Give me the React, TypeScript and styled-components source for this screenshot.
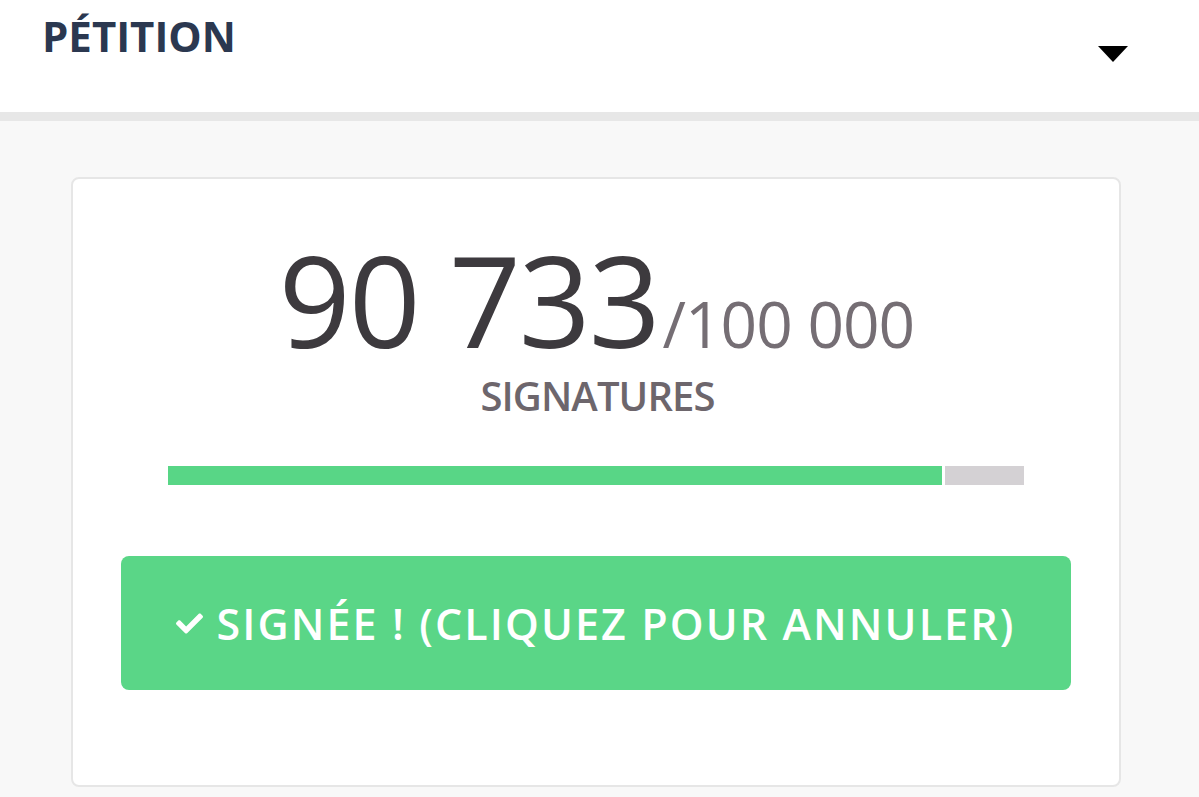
import React from "react";
import styled, { createGlobalStyle } from "styled-components";
import { FaCheck } from "react-icons/fa";

const Global = createGlobalStyle`
  html, body { margin: 0; padding: 0; background: #f8f8f8; }
  body { font-family: "Open Sans", "Noto Sans", sans-serif; }
  #root { min-height: 797px; }
`;

const Page = styled.div`
  width: 1199px;
  min-height: 797px;
  background: #f8f8f8;
  display: flex;
  flex-direction: column;
`;

const Header = styled.header`
  background: #ffffff;
  border-bottom: 9px solid #e7e7e7;
  box-sizing: content-box;
  display: flex;
  justify-content: space-between;
  align-items: flex-start;
  padding: 15px 71px 0 42px;
  height: 97px;
`;

const Title = styled.h1`
  margin: 0;
  font-size: 42px;
  line-height: 1;
  font-weight: 700;
  letter-spacing: 0;
  color: #2b3850;
`;

const Caret = styled.svg`
  margin-top: 31px;
  width: 30px;
  height: 16px;
  display: block;
`;

const Main = styled.main`
  padding: 56px 78px 0 71px;
`;

const Card = styled.section`
  background: #ffffff;
  border: 2px solid #e6e6e6;
  border-radius: 8px;
  padding: 57px 48px 95px;
  display: flex;
  flex-direction: column;
  align-items: center;
`;

const Count = styled.div`
  font-size: 126px;
  line-height: 1;
  font-weight: 400;
  color: #3d3a3e;
  letter-spacing: -2.2px;
  white-space: nowrap;
  padding-left: 1px;
`;

const Goal = styled.span`
  font-size: 64px;
  letter-spacing: -1px;
  color: #756e74;
  margin-left: 4px;
`;

const Label = styled.div`
  margin-top: 14px;
  font-size: 40px;
  line-height: 1;
  font-weight: 600;
  letter-spacing: -0.9px;
  color: #6d666c;
  padding-left: 3px;
`;

const Track = styled.div`
  margin-top: 50px;
  width: 856px;
  height: 19px;
  background: #d4d1d4;
  display: flex;
`;

const Fill = styled.div`
  height: 100%;
  background: #58d686;
  border-right: 3px solid #ffffff;
  box-sizing: border-box;
`;

const SignButton = styled.button`
  margin-top: 71px;
  width: 950px;
  height: 134px;
  border: none;
  border-radius: 8px;
  background: #5ad687;
  color: #ffffff;
  font-family: "Open Sans", "Noto Sans", sans-serif;
  font-size: 43px;
  line-height: 1;
  font-weight: 600;
  letter-spacing: 2.1px;
  display: flex;
  align-items: center;
  justify-content: center;
  cursor: pointer;
  padding: 0 0 0 0;
  svg {
    width: 27px;
    height: 27px;
    margin-right: 13px;
    flex: none;
  }
`;

export default function App() {
  const count = 90733;
  const goal = 100000;
  const pct = (count / goal) * 100;
  return (
    <Page>
      <Global />
      <Header>
        <Title>PÉTITION</Title>
        <Caret viewBox="0 0 30 16" aria-hidden>
          <polygon points="0,0 30,0 15,16" fill="#000" />
        </Caret>
      </Header>
      <Main>
        <Card>
          <Count>
            90 733<Goal>/100 000</Goal>
          </Count>
          <Label>SIGNATURES</Label>
          <Track>
            <Fill style={{ width: `${pct}%` }} />
          </Track>
          <SignButton>
            <FaCheck />
            <span>SIGNÉE ! (CLIQUEZ POUR ANNULER)</span>
          </SignButton>
        </Card>
      </Main>
    </Page>
  );
}
